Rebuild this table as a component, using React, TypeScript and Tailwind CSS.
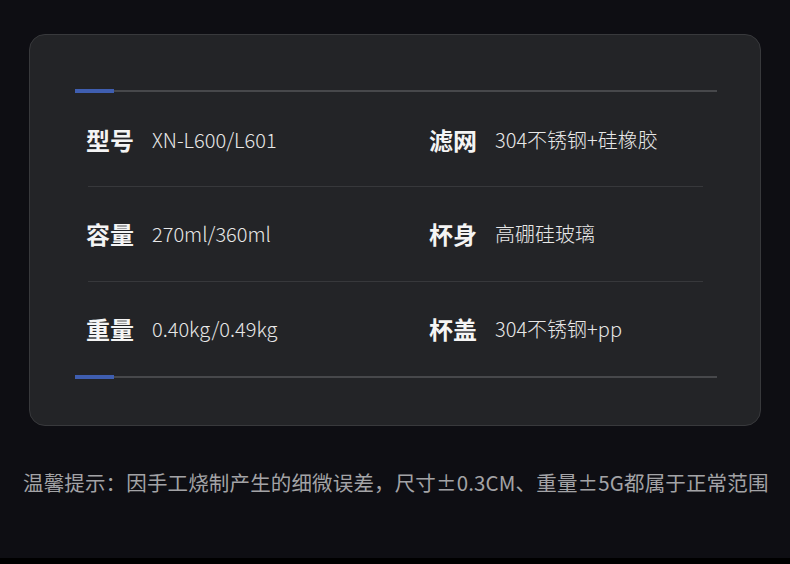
const specs: [string, string, string, string][] = [
  ["型号", "XN-L600/L601", "滤网", "304不锈钢+硅橡胶"],
  ["容量", "270ml/360ml", "杯身", "高硼硅玻璃"],
  ["重量", "0.40kg/0.49kg", "杯盖", "304不锈钢+pp"],
];

// row heights between the rules, taken from the picture
const rowHeights = ["h-[93px]", "h-[94px]", "h-[93px]"];

function AccentLine() {
  return (
    <div className="flex items-center h-[4px]">
      <div className="w-[39px] h-[4px] bg-[#3f5eb0]" />
      <div className="flex-1 h-[2px] bg-[#47484b]" />
    </div>
  );
}

function Spec({ label, value }: { label: string; value: string }) {
  return (
    <div className="flex items-center gap-[18px]">
      <span className="text-[24px] font-bold text-[#f4f4f4] leading-none">{label}</span>
      <span className="text-[20px] font-light text-[#e8e8e8] leading-none">{value}</span>
    </div>
  );
}

export default function App() {
  return (
    <div
      className="w-[790px] h-[564px] bg-[#0e0e13] flex flex-col overflow-hidden"
      style={{ fontFamily: '"Noto Sans CJK SC", "Noto Sans", sans-serif' }}
    >
      {/* Spec card */}
      <div className="mt-[34px] mx-[29px] h-[392px] rounded-[16px] border border-[#38393c] bg-[#232427] pt-[54px] pl-[45px] pr-[43px]">
        <AccentLine />
        {specs.map((row, i) => (
          <div key={i}>
            {i > 0 && <div className="ml-[13px] mr-[14px] h-px bg-[#37383b]" />}
            <div className={`flex items-center pl-[11px] ${rowHeights[i]}`}>
              <div className="w-[343px]">
                <Spec label={row[0]} value={row[1]} />
              </div>
              <Spec label={row[2]} value={row[3]} />
            </div>
          </div>
        ))}
        <AccentLine />
      </div>

      {/* Note */}
      <div className="flex-1 flex items-center pl-[23px] pb-[20px]">
        <p className="text-[20.5px] tracking-[0.15px] text-[#a3a3a6] leading-none whitespace-nowrap">
          温馨提示：因手工烧制产生的细微误差，尺寸±0.3CM、重量±5G都属于正常范围
        </p>
      </div>
      <div className="h-[6px] bg-black" />
    </div>
  );
}
